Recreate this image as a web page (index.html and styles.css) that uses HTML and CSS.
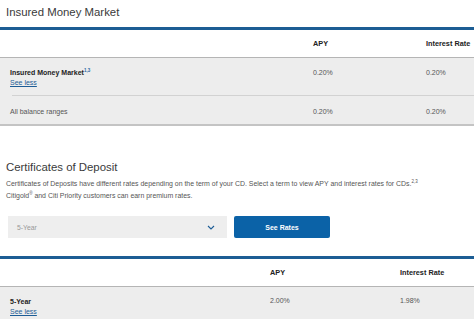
FILE: index.html
```html
<!DOCTYPE html>
<html lang="en">
<head>
  <meta charset="UTF-8">
  <title>Rates</title>
  <link rel="stylesheet" href="styles.css">
</head>
<body>
  <h2 class="section-title first">Insured Money Market</h2>

  <div class="rate-table imm">
    <div class="rate-head">
      <span></span>
      <span>APY</span>
      <span>Interest Rate</span>
    </div>
    <div class="rate-body">
      <div class="rate-row split">
        <div class="label">
          <b>Insured Money Market<sup>1,3</sup></b>
          <a href="#">See less</a>
        </div>
        <span>0.20%</span>
        <span>0.20%</span>
      </div>
      <div class="rate-row">
        <div class="label">All balance ranges</div>
        <span>0.20%</span>
        <span>0.20%</span>
      </div>
    </div>
  </div>

  <h2 class="section-title">Certificates of Deposit</h2>
  <p class="intro">Certificates of Deposits have different rates depending on the term of your CD. Select a term to view APY and interest rates for CDs.<sup>2,3</sup><br>
  Citigold<sup>&reg;</sup> and Citi Priority customers can earn premium rates.</p>

  <div class="term-picker">
    <div class="select">
      <span>5-Year</span>
      <svg width="8" height="5" viewBox="0 0 8 5"><path d="M1 1l3 3 3-3" fill="none" stroke="#1d5d96" stroke-width="1.1"/></svg>
    </div>
    <button class="btn-rates">See Rates</button>
  </div>

  <div class="rate-table cd">
    <div class="rate-head">
      <span></span>
      <span>APY</span>
      <span>Interest Rate</span>
    </div>
    <div class="rate-body">
      <div class="rate-row">
        <div class="label">
          <b>5-Year</b>
          <a href="#">See less</a>
        </div>
        <span>2.00%</span>
        <span>1.98%</span>
      </div>
    </div>
  </div>
</body>
</html>
```

FILE: styles.css
```css
body {
  margin: 0;
  font-family: "Liberation Sans", Arial, sans-serif;
  color: #333;
  background: #fff;
  overflow: hidden;
}

.section-title {
  margin: 0;
  padding: 0 6px;
  font-size: 11.4px;
  font-weight: normal;
  color: #3a3a3a;
  line-height: 17px;
}

.section-title.first {
  padding-top: 4px;
  height: 23px;
}

/* tables */
.rate-table {
  border-top: 3px solid #1c5d94;
  font-size: 7px;
}

.rate-head,
.rate-row {
  display: grid;
  padding-left: 10px;
  align-items: center;
}

.imm .rate-head,
.imm .rate-row {
  grid-template-columns: 303px 113px 1fr;
}

.cd .rate-head,
.cd .rate-row {
  grid-template-columns: 260px 130px 1fr;
}

.rate-head {
  height: 27px;
  font-size: 7.3px;
  font-weight: bold;
  color: #222;
  border-bottom: 1px solid #b5b5b5;
}

.rate-body {
  background: #ededed;
  border-bottom: 2px solid #c4c4c4;
}

.rate-row {
  color: #555;
  height: 26px;
}

.rate-row.split {
  height: 38px;
  background: linear-gradient(#d2d2d2, #d2d2d2) no-repeat 12px 100% / 100% 1px;
  align-items: start;
  padding-top: 10px;
  box-sizing: border-box;
}

.rate-row.split + .rate-row {
  padding-top: 2px;
}

.label b {
  display: block;
  color: #222;
  line-height: 9px;
}

.label a {
  color: #1d5d96;
  line-height: 12px;
}

sup {
  font-size: 4.5px;
  line-height: 0;
  color: #2a6aa3;
  vertical-align: 3px;
}

.rate-row.split span {
  line-height: 9px;
}

/* certificates */
.imm {
  margin-bottom: 33px;
}

.intro {
  margin: 2px 0 0;
  padding: 0 6px;
  font-size: 6.95px;
  line-height: 12px;
  color: #555;
}

.intro sup {
  color: #555;
}

.term-picker {
  display: flex;
  gap: 7px;
  padding: 14px 0 0 8px;
  height: 22px;
  margin-bottom: 18px;
}

.select {
  width: 219px;
  background: #eeeeee;
  display: flex;
  align-items: center;
  justify-content: space-between;
  padding: 0 12px 0 9px;
  box-sizing: border-box;
  font-size: 6.8px;
  color: #999;
}

.btn-rates {
  width: 96px;
  border: none;
  border-radius: 2px;
  background: #0b62a7;
  color: #fff;
  font-family: inherit;
  font-size: 7px;
  font-weight: bold;
}

.cd .rate-row {
  height: 40px;
  align-items: start;
  padding-top: 10px;
  box-sizing: border-box;
}
```
